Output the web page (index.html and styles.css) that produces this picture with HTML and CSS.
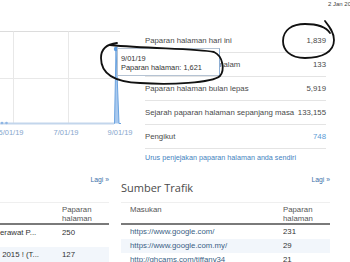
FILE: index.html
```html
<!DOCTYPE html>
<html lang="ms">
<head>
  <meta charset="UTF-8" />
  <title>Statistik</title>
  <link rel="stylesheet" href="styles.css">
</head>
<body>
  <div class="page">
    <div class="topbar">2 Jan 2020 14:00</div>

    <div class="overview">
      <svg class="chart" width="140" height="112" viewBox="0 0 140 112">
        <line x1="0" y1="3.5" x2="120" y2="3.5" stroke="#dcdcdc" />
        <line x1="0" y1="50.5" x2="120" y2="50.5" stroke="#e8e8e8" />
        <line x1="13.5" y1="3.5" x2="13.5" y2="96" stroke="#e8e8e8" />
        <line x1="68.5" y1="3.5" x2="68.5" y2="96" stroke="#e8e8e8" />
        <polygon points="114.5,95.5 116,21 119,95.5" fill="#a9c9ee" />
        <polyline points="0,95.5 114.5,95.5 116,21 119,95.5 121,95.5" fill="none" stroke="#6aa3e0" stroke-width="1" />
        <line x1="0" y1="95.5" x2="114" y2="95.5" stroke="#c3d6ec" stroke-width="2" />
        <circle cx="2" cy="95" r="1.3" fill="#8fb6e4" />
        <circle cx="6.5" cy="95" r="1.3" fill="#8fb6e4" />
        <circle cx="116" cy="21" r="2.2" fill="#5b9be0" />
        <g class="axis-label">
          <text x="11" y="106.5" text-anchor="middle">5/01/19</text>
          <text x="66" y="106.5" text-anchor="middle">7/01/19</text>
          <text x="120" y="106.5" text-anchor="middle">9/01/19</text>
        </g>
      </svg>

      <div class="stats">
        <div class="stat"><span>Paparan halaman hari ini</span><span>1,839</span></div>
        <div class="stat"><span>Paparan halaman semalam</span><span>133</span></div>
        <div class="stat"><span>Paparan halaman bulan lepas</span><span>5,919</span></div>
        <div class="stat"><span>Sejarah paparan halaman sepanjang masa</span><span>133,155</span></div>
        <div class="stat"><span>Pengikut</span><span class="blue">748</span></div>
        <a class="manage" href="#">Urus penjejakan paparan halaman anda sendiri</a>
      </div>
    </div>

    <div class="bottom">
      <section class="panel panel-posts">
        <div class="panel-head">
          <h2></h2>
          <a class="more" href="#">Lagi »</a>
        </div>
        <table class="posts">
          <thead>
            <tr><th class="c1"></th><th>Paparan<br>halaman</th></tr>
          </thead>
          <tbody>
            <tr><td class="c1">erawat P...</td><td>250</td></tr>
            <tr class="alt"><td class="c1">&nbsp;2015 ! (T...</td><td>127</td></tr>
          </tbody>
        </table>
      </section>

      <section class="panel panel-sources">
        <div class="panel-head">
          <h2>Sumber Trafik</h2>
          <a class="more" href="#">Lagi »</a>
        </div>
        <table class="sources">
          <thead>
            <tr><th class="c1">Masukan</th><th>Paparan<br>halaman</th></tr>
          </thead>
          <tbody>
            <tr><td class="c1"><a href="#">https://www.google.com/</a></td><td>231</td></tr>
            <tr class="alt"><td class="c1"><a href="#">https://www.google.com.my/</a></td><td>29</td></tr>
            <tr><td class="c1"><a href="#">http://ghcams.com/tiffany34</a></td><td>21</td></tr>
          </tbody>
        </table>
      </section>
    </div>

    <div class="tooltip">
      <div>9/01/19</div>
      <div>Paparan halaman: 1,621</div>
    </div>

    <svg class="marks" width="350" height="262" viewBox="0 0 350 262">
      <path d="M117 43 C108 44 101 48 101 58 C101 72 112 82 140 83 C170 85 212 83 220 76 C225 70 223 56 214 52 C195 48 150 49 110 45" />
      <path d="M325 21 C329 26 334 32 334 40 C334 52 322 58 305 58 C290 58 283 50 283 41 C283 30 292 24 305 24 C318 24 326 27 330 33" />
    </svg>
  </div>
</body>
</html>
```

FILE: styles.css
```css
body {
  margin: 0;
  background: #fff;
  font-family: 'Liberation Sans', Arial, sans-serif;
  color: #444;
}

.page {
  position: relative;
  width: 350px;
  height: 262px;
  overflow: hidden;
}

.topbar {
  height: 28px;
  padding-left: 328px;
  font-size: 6px;
  line-height: 9px;
  white-space: nowrap;
  color: #444;
}

.overview {
  display: flex;
  align-items: flex-start;
  height: 144px;
}

.chart {
  display: block;
  flex: none;
}

.axis-label {
  font-family: 'Liberation Sans', Arial, sans-serif;
  font-size: 7.5px;
  fill: #86a6cc;
}

.stats {
  margin-left: 5px;
  padding-top: 1px;
  width: 181px;
  flex: none;
}

.stat {
  display: flex;
  justify-content: space-between;
  align-items: center;
  height: 23px;
  border-bottom: 1px solid #e4e4e4;
  font-size: 7.8px;
  color: #4a4a4a;
  white-space: nowrap;
}

.stat .blue {
  color: #5b9bd5;
}

.manage {
  display: block;
  line-height: 18px;
  font-size: 7.2px;
  color: #4482c0;
  text-decoration: none;
  white-space: nowrap;
}

.bottom {
  display: flex;
  align-items: flex-start;
}

.panel {
  flex: none;
}

.panel-posts {
  width: 109px;
}

.panel-sources {
  width: 209px;
  margin-left: 12px;
}

.panel-head {
  display: flex;
  justify-content: space-between;
  align-items: flex-start;
  height: 30px;
}

.panel-head h2 {
  margin: 9px 0 0;
  font-family: 'Open Sans', sans-serif;
  font-weight: normal;
  font-size: 11px;
  line-height: 14px;
  color: #4a4a4a;
}

.more {
  font-size: 6.8px;
  line-height: 16px;
  color: #3d6fa8;
  text-decoration: none;
}

table {
  width: 100%;
  border-collapse: separate;
  border-spacing: 0;
  font-size: 7.8px;
  table-layout: fixed;
}

th {
  text-align: left;
  font-weight: normal;
  vertical-align: top;
  line-height: 9px;
  padding: 2px 0 0;
  color: #555;
  border-top: 1px solid #efefef;
  border-bottom: 2px solid #7a7a7a;
}

td {
  padding: 0;
  color: #333;
  white-space: nowrap;
  overflow: hidden;
}

tr.alt td {
  background: #f2f6fb;
}

.posts .c1 {
  width: 62px;
}

.posts td {
  vertical-align: top;
  line-height: 9px;
  padding: 3px 0 10px;
}

.sources .c1 {
  width: 153px;
  padding-left: 9px;
}

.sources td {
  line-height: 14px;
}

.sources a {
  color: #3a5f85;
  text-decoration: none;
}

.tooltip {
  position: absolute;
  left: 117px;
  top: 48px;
  width: 95px;
  padding: 5px 3px 3px;
  background: #fff;
  border: 1px solid #b5c3d3;
  border-right-color: #8eaed3;
  font-size: 7.4px;
  line-height: 9px;
  color: #333;
  white-space: nowrap;
}

.marks {
  position: absolute;
  left: 0;
  top: 0;
  fill: none;
  stroke: #111;
  stroke-width: 1.8;
  stroke-linecap: round;
  pointer-events: none;
}
```
